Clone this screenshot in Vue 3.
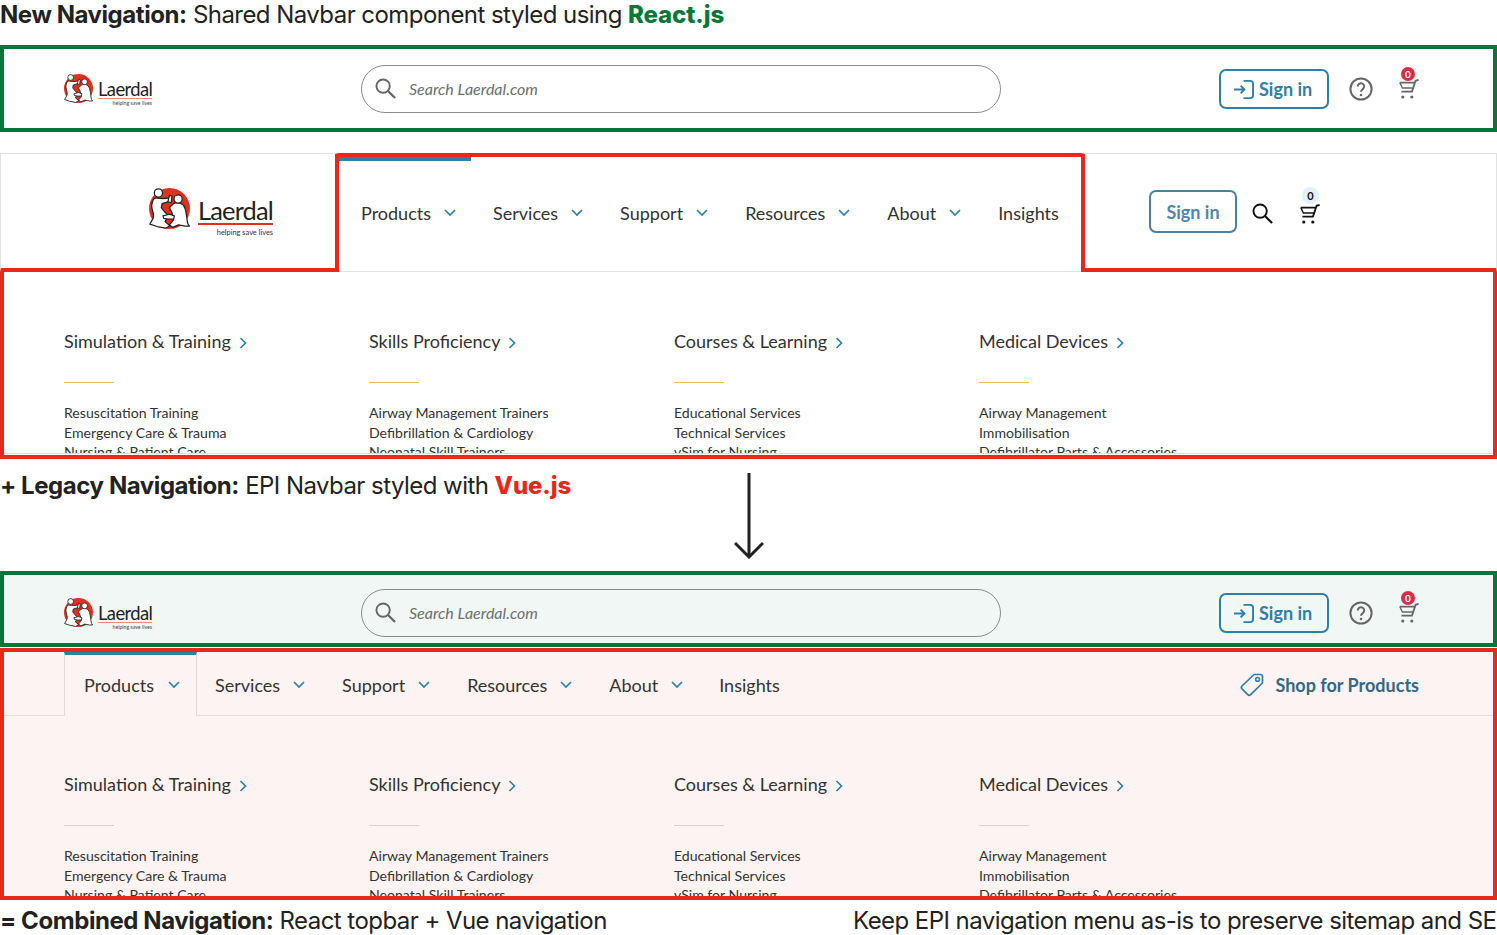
<script setup>
const legacyNav = [
  { label: 'Products', chev: true },
  { label: 'Services', chev: true },
  { label: 'Support', chev: true },
  { label: 'Resources', chev: true },
  { label: 'About', chev: true },
  { label: 'Insights', chev: false }
]
const comboNav = legacyNav.slice(1)
const columns = [
  { title: 'Simulation & Training', links: ['Resuscitation Training', 'Emergency Care & Trauma', 'Nursing & Patient Care'] },
  { title: 'Skills Proficiency', links: ['Airway Management Trainers', 'Defibrillation & Cardiology', 'Neonatal Skill Trainers'] },
  { title: 'Courses & Learning', links: ['Educational Services', 'Technical Services', 'vSim for Nursing'] },
  { title: 'Medical Devices', links: ['Airway Management', 'Immobilisation', 'Defibrillator Parts & Accessories'] }
]
</script>

<template>
  <div class="page">
    <svg class="defs" aria-hidden="true">
      <symbol id="emblem" viewBox="0 0 100 100">
        <circle cx="50" cy="50" r="50" fill="#e0301e" />
        <g fill="#fff" stroke="#222" stroke-width="3" stroke-linejoin="round">
          <path d="M14 24C6 32 5 44 9 56c2 8 4 14 0 20L2 88l18 6 20 4 11-6-12-10 9-14-10-10-8-10 2-10 20-6v-8l-18 2z" />
          <path d="M60 38c10-5 24-2 28 12 4 12 4 28 7 38l4 5-11 0-16-3-14 6-8-6 10-12-4-18-6-12z" />
          <circle cx="23" cy="12" r="10" />
          <circle cx="71" cy="27" r="10" />
          <path d="M46 34l4-16 6 2-2 16z" />
          <path d="M34 68l16-4 12 4-2 8-14 0-10-2z" />
        </g>
      </symbol>
      <symbol id="searchIcon" viewBox="0 0 22 22">
        <circle cx="8.5" cy="8.5" r="7" fill="none" stroke="currentColor" stroke-width="2" />
        <path d="M13.6 13.6L21 21" fill="none" stroke="currentColor" stroke-width="2.4" />
      </symbol>
      <symbol id="signinIcon" viewBox="0 0 22 22">
        <path d="M1 11h11M8 7l4 4-4 4" fill="none" stroke="currentColor" stroke-width="2" />
        <path d="M11 2h7a3 3 0 0 1 3 3v12a3 3 0 0 1-3 3h-7" fill="none" stroke="currentColor" stroke-width="2" />
      </symbol>
      <symbol id="helpIcon" viewBox="0 0 24 24">
        <circle cx="12" cy="12" r="10.6" fill="none" stroke="currentColor" stroke-width="2" />
        <path d="M8.8 9.4a3.2 3.2 0 1 1 5 2.7c-1.2.8-1.8 1.4-1.8 2.7" fill="none" stroke="currentColor" stroke-width="2" />
        <circle cx="12" cy="18" r="1.3" fill="currentColor" />
      </symbol>
      <symbol id="cartIcon" viewBox="0 0 20 20">
        <path d="M19.6.8L16.6 1.8 13 12.6H2.4M.8 3.6h14.8" fill="none" stroke="currentColor" stroke-width="1.8" />
        <path d="M.8 3.6L3.4 9h10.8" fill="none" stroke="currentColor" stroke-width="1.3" />
        <circle cx="3.8" cy="18" r="1.6" fill="currentColor" />
        <circle cx="12.8" cy="18" r="1.6" fill="currentColor" />
      </symbol>
      <symbol id="chevDown" viewBox="0 0 12 8">
        <path d="M1 1l5 5 5-5" fill="none" stroke="currentColor" stroke-width="1.7" />
      </symbol>
      <symbol id="chevRight" viewBox="0 0 8 12">
        <path d="M1.5 1l5 5-5 5" fill="none" stroke="currentColor" stroke-width="1.7" />
      </symbol>
    </svg>

    <div class="heading h-first"><b>New Navigation:</b> Shared Navbar component styled using <strong class="green">React.js</strong></div>

    <header class="frame green-frame bar-a">
      <div class="topbar">
        <div class="logo">
          <svg class="emblem"><use href="#emblem" /></svg>
          <div class="wordmark">
            <span class="word">Laerdal</span>
            <span class="tag">helping save lives</span>
          </div>
        </div>
        <div class="search">
          <svg class="s-icon"><use href="#searchIcon" /></svg>
          <span class="placeholder">Search Laerdal.com</span>
        </div>
        <button class="signin">
          <svg class="in-icon"><use href="#signinIcon" /></svg>Sign in
        </button>
        <svg class="help"><use href="#helpIcon" /></svg>
        <div class="cart">
          <svg class="cart-icon"><use href="#cartIcon" /></svg>
          <span class="badge">0</span>
        </div>
      </div>
    </header>

    <section class="legacy">
      <div class="legacy-head">
        <div class="legacy-logo">
          <div class="logo logo-big">
            <svg class="emblem"><use href="#emblem" /></svg>
            <div class="wordmark">
              <span class="word">Laerdal</span>
              <span class="tag">helping save lives</span>
            </div>
          </div>
        </div>
        <nav class="legacy-nav">
          <div class="active-bar"></div>
          <ul class="nav-list">
            <li v-for="item in legacyNav" :key="item.label" class="nav-item">
              {{ item.label }}
              <svg v-if="item.chev" class="chev"><use href="#chevDown" /></svg>
            </li>
          </ul>
        </nav>
        <div class="legacy-tools">
          <button class="signin-old">Sign in</button>
          <svg class="old-search"><use href="#searchIcon" /></svg>
          <div class="old-cart">
            <svg class="old-cart-icon"><use href="#cartIcon" /></svg>
            <span class="old-badge">0</span>
          </div>
        </div>
      </div>
      <div class="legacy-sub">
        <div class="sub-inner">
          <div v-for="col in columns" :key="col.title" class="col">
            <div class="col-title">{{ col.title }}<svg class="chev-r"><use href="#chevRight" /></svg></div>
            <div class="rule rule-orange"></div>
            <div v-for="l in col.links" :key="l" class="col-link">{{ l }}</div>
          </div>
        </div>
      </div>
    </section>

    <div class="middle">
      <div class="heading h-second"><b>+ Legacy Navigation:</b> EPI Navbar styled with <strong class="red">Vue.js</strong></div>
      <svg class="arrow" width="30" height="86" viewBox="0 0 30 86">
        <path d="M15 0V84M1 70l14 14 14-14" fill="none" stroke="#222" stroke-width="3" />
      </svg>
    </div>

    <header class="frame green-frame bar-b">
      <div class="topbar">
        <div class="logo">
          <svg class="emblem"><use href="#emblem" /></svg>
          <div class="wordmark">
            <span class="word">Laerdal</span>
            <span class="tag">helping save lives</span>
          </div>
        </div>
        <div class="search">
          <svg class="s-icon"><use href="#searchIcon" /></svg>
          <span class="placeholder">Search Laerdal.com</span>
        </div>
        <button class="signin">
          <svg class="in-icon"><use href="#signinIcon" /></svg>Sign in
        </button>
        <svg class="help"><use href="#helpIcon" /></svg>
        <div class="cart">
          <svg class="cart-icon"><use href="#cartIcon" /></svg>
          <span class="badge">0</span>
        </div>
      </div>
    </header>

    <section class="frame combo">
      <nav class="combo-nav">
        <div class="tab">
          Products
          <svg class="chev"><use href="#chevDown" /></svg>
        </div>
        <ul class="nav-list combo-list">
          <li v-for="item in comboNav" :key="item.label" class="nav-item">
            {{ item.label }}
            <svg v-if="item.chev" class="chev"><use href="#chevDown" /></svg>
          </li>
        </ul>
        <div class="shop">
          <svg class="tag-icon" viewBox="0 0 24 24" width="24" height="24">
            <path d="M14 1.5h6.5a2 2 0 0 1 2 2V10L10.6 21.6a2 2 0 0 1-2.8 0L2 15.8a2 2 0 0 1 0-2.8z" fill="none" stroke="currentColor" stroke-width="1.7" stroke-linejoin="round" />
            <circle cx="17.6" cy="6.4" r="1.9" fill="none" stroke="currentColor" stroke-width="1.6" />
          </svg>
          Shop for Products
        </div>
      </nav>
      <div class="sub-inner combo-sub">
        <div v-for="col in columns" :key="col.title" class="col">
          <div class="col-title">{{ col.title }}<svg class="chev-r"><use href="#chevRight" /></svg></div>
          <div class="rule rule-gray"></div>
          <div v-for="l in col.links" :key="l" class="col-link">{{ l }}</div>
        </div>
      </div>
    </section>

    <div class="footer-row">
      <div class="heading"><b>= Combined Navigation:</b> React topbar + Vue navigation</div>
      <div class="heading">Keep EPI navigation menu as-is to preserve sitemap and SEO</div>
    </div>
  </div>
</template>

<style>
html, body { margin: 0; background: #fff; overflow: hidden; }
</style>

<style scoped>
.page {
  width: 1497px;
  height: 935px;
  overflow: hidden;
  display: flex;
  flex-direction: column;
  font-family: Lato, "Liberation Sans", sans-serif;
  color: #333;
  background: #fff;
}
.defs { display: none; }
ul { list-style: none; margin: 0; padding: 0; }
button { font-family: inherit; background: none; cursor: pointer; padding: 0; }

.heading {
  font-family: Inter, "Liberation Sans", sans-serif;
  font-size: 24px;
  line-height: 29px;
  color: #222;
  white-space: nowrap;
  font-weight: 400;
  letter-spacing: -0.55px;
}
.heading b { font-weight: 700; letter-spacing: -0.43px; }
.heading strong { font-weight: 800; letter-spacing: -0.1px; }
.green { color: #08783a; }
.red { color: #e8261a; }
.h-first { height: 45px; flex: none; }
.h-second { padding-top: 12px; width: 734px; }

.frame { box-sizing: border-box; border: 4px solid; flex: none; }
.green-frame { border-color: #05763a; }
.bar-a { height: 87px; padding-top: 16px; }
.bar-b { height: 76px; padding-top: 14px; background: #f1f7f5; }

.topbar { display: flex; align-items: center; height: 48px; padding-left: 60px; }
.logo { display: flex; width: 297px; height: 29px; gap: 5px; margin-top: -2px; }
.emblem { width: 29px; height: 29px; flex: none; }
.wordmark { display: flex; flex-direction: column; width: 54px; margin-top: 6px; }
.word {
  font-size: 18.4px;
  line-height: 18px;
  color: #222;
  letter-spacing: -0.6px;
  border-bottom: 1.5px solid #f08a80;
  white-space: nowrap;
  height: 18px;
}
.tag {
  font-size: 5.2px;
  line-height: 7px;
  margin-top: 1px;
  color: #444;
  text-align: right;
  white-space: nowrap;
}
.logo-big { width: auto; height: 42px; gap: 8px; margin: 0; }
.logo-big .emblem { width: 41px; height: 41px; }
.logo-big .wordmark { width: 75px; margin-top: 9px; }
.logo-big .word { font-size: 25.4px; line-height: 26px; height: 27px; letter-spacing: -0.8px; border-bottom: 2px solid #e0301e; }
.logo-big .tag { font-size: 7.4px; line-height: 11px; margin-top: 2px; color: #333; }

.search {
  box-sizing: border-box;
  width: 640px;
  height: 48px;
  border: 1px solid #8b8b8b;
  border-radius: 24px;
  display: flex;
  align-items: center;
  padding-left: 13px;
  color: #6b6b6b;
}
.s-icon { width: 21px; height: 21px; margin-right: 13px; color: #666; margin-top: -2px; }
.placeholder { font-style: italic; font-size: 16px; color: #6e6e6e; margin-top: -2px; }

.signin {
  box-sizing: border-box;
  margin-left: 218px;
  width: 110px;
  height: 40px;
  border: 2px solid #2e80a6;
  border-radius: 7px;
  color: #2e80a6;
  font-size: 18px;
  font-weight: 700;
  display: flex;
  align-items: center;
  padding-left: 12px;
}
.in-icon { width: 21px; height: 21px; margin-right: 5px; }
.help { width: 24px; height: 24px; margin-left: 20px; color: #666; }
.cart { position: relative; width: 20px; height: 20px; margin-left: 26px; }
.cart-icon { width: 20px; height: 20px; color: #666; display: block; }
.badge {
  position: absolute;
  left: 2px;
  top: -12px;
  width: 14px;
  height: 14px;
  border-radius: 50%;
  background: #db2c45;
  color: #fff;
  font-size: 10px;
  font-weight: 700;
  line-height: 14px;
  text-align: center;
}

.legacy { height: 306px; display: flex; flex-direction: column; margin-top: 21px; flex: none; }
.legacy-head { display: flex; height: 119px; flex: none; }
.legacy-logo {
  box-sizing: border-box;
  width: 339px;
  border-top: 1px solid #e2e2e2;
  border-left: 1px solid #e2e2e2;
  border-right: 4px solid #e7281a;
  border-bottom: 4px solid #e7281a;
  padding: 34px 0 0 148px;
}
.legacy-nav {
  box-sizing: border-box;
  width: 742px;
  border-top: 4px solid #e7281a;
  border-bottom: 1px solid #e2e2e2;
  padding-left: 22px;
}
.active-bar { width: 132px; height: 4px; margin-left: -22px; background: #2e80a6; }
.nav-list { display: flex; height: 104px; align-items: center; }
.nav-item {
  display: flex;
  align-items: center;
  font-size: 18px;
  color: #333;
  margin-right: 37px;
  white-space: nowrap;
}
.chev { width: 12px; height: 8px; margin-left: 13px; color: #2e80a6; }

.legacy-tools {
  box-sizing: border-box;
  flex: 1;
  border-left: 4px solid #e7281a;
  border-top: 1px solid #e2e2e2;
  border-right: 1px solid #e2e2e2;
  border-bottom: 4px solid #e7281a;
  padding: 36px 0 0 64px;
  display: flex;
  align-items: flex-start;
}
.signin-old {
  box-sizing: border-box;
  width: 88px;
  height: 43px;
  border: 2px solid #4a80a4;
  border-radius: 7px;
  font-size: 18px;
  font-weight: 700;
  color: #4f87ab;
}
.old-search { width: 21px; height: 21px; margin: 13px 0 0 15px; color: #111; }
.old-cart { position: relative; width: 20px; height: 20px; margin: 14px 0 0 27px; }
.old-cart-icon { width: 20px; height: 20px; color: #111; display: block; }
.old-badge {
  position: absolute;
  left: 2px;
  top: -17px;
  width: 17px;
  height: 17px;
  border-radius: 50%;
  background: #e3f0f8;
  color: #111;
  font-size: 11px;
  font-weight: 700;
  line-height: 17px;
  text-align: center;
}

.legacy-sub {
  box-sizing: border-box;
  height: 187px;
  border: 4px solid #e7281a;
  border-top: none;
}
.sub-inner {
  display: flex;
  box-sizing: border-box;
  height: 182px;
  padding: 56px 0 0 60px;
  overflow: hidden;
  border-bottom: 1px solid #dedede;
}
.col { width: 305px; flex: none; }
.col-title { font-size: 18px; line-height: 26px; color: #333; white-space: nowrap; }
.chev-r { width: 8px; height: 12px; margin-left: 8px; color: #2e80a6; vertical-align: -1px; }
.rule { width: 50px; height: 1px; margin: 28px 0 20px; }
.rule-orange { background: #e9bb62; }
.rule-gray { background: #d9cfcd; }
.col-link { font-size: 14.1px; line-height: 19.7px; color: #333; white-space: nowrap; }

.middle { display: flex; height: 112px; flex: none; }
.arrow { margin-top: 14px; flex: none; }

.combo {
  height: 252px;
  border-color: #e7281a;
  background: #fdf3f2;
  margin-top: 1px;
  overflow: hidden;
}
.combo-nav {
  display: flex;
  box-sizing: border-box;
  height: 64px;
  padding-left: 60px;
  border-bottom: 1px solid #e8dcda;
}
.tab {
  box-sizing: border-box;
  width: 133px;
  height: 64px;
  border-top: 3px solid #2e80a6;
  border-left: 1px solid #e2dad8;
  border-right: 1px solid #e2dad8;
  background: #fdf3f2;
  padding: 19px 0 0 19px;
  font-size: 18px;
  line-height: 22px;
  color: #333;
  display: flex;
  align-items: flex-start;
}
.tab .chev { margin-top: 7px; margin-left: 14px; }
.combo-list { height: 64px; margin-left: 18px; padding-top: 2px; box-sizing: border-box; }
.combo-list .nav-item:last-child { margin-left: -1px; }
.shop {
  margin-left: auto;
  padding-right: 74px;
  display: flex;
  align-items: center;
  padding-top: 2px;
  font-size: 18px;
  font-weight: 700;
  color: #33688a;
  white-space: nowrap;
}
.tag-icon { margin-right: 11px; color: #2e7ea5; }
.combo-sub { height: 190px; padding-top: 55px; border-bottom: none; }

.footer-row {
  display: grid;
  grid-template-columns: 853px 1fr;
  padding-top: 6px;
}
</style>
